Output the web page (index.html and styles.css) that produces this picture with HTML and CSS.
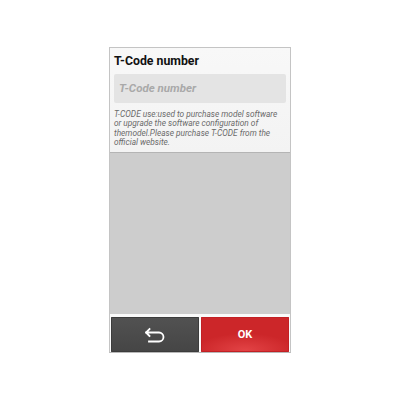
FILE: index.html
```html
<!DOCTYPE html>
<html>
<head>
<meta charset="utf-8">
<link rel="stylesheet" href="styles.css">
</head>
<body>
<div class="panel">
  <div class="top">
    <div class="title">T-Code number</div>
    <div class="input">T-Code number</div>
    <p class="desc">T-CODE use:used to purchase model software or upgrade the software configuration of themodel.Please purchase T-CODE from the official website.</p>
  </div>
  <div class="body"></div>
  <div class="actions">
    <button class="btn back" type="button">
      <svg width="20" height="16" viewBox="0 0 20 16"><path d="M4.5 2 L1 5.5 L4.5 9 M1 5.5 H14 A4.5 4.5 0 0 1 14 14.5 H4" fill="none" stroke="#fff" stroke-width="1.8" stroke-linecap="square" stroke-linejoin="miter"/></svg>
    </button>
    <button class="btn ok" type="button">OK</button>
  </div>
</div>
</body>
</html>
```
FILE: styles.css
```css
html, body {
  margin: 0;
  padding: 0;
  background: #fff;
}
body {
  font-family: Roboto, "Liberation Sans", Arial, sans-serif;
}
.panel {
  margin: 47px 0 0 109px;
  width: 180px;
  height: 304px;
  border: 1px solid #c4c4c4;
  border-bottom-color: #b8b8b8;
  display: flex;
  flex-direction: column;
}
.top {
  background: linear-gradient(#f8f8f8, #f3f3f3);
  border-bottom: 1px solid #b4b4b4;
  padding: 5px 4px 0 4px;
  box-sizing: border-box;
  height: 105px;
}
.title {
  font-weight: bold;
  font-size: 12.3px;
  line-height: 16px;
  color: #111;
}
.input {
  margin-top: 5px;
  height: 29px;
  background: #e4e4e4;
  border-radius: 2px;
  font-weight: bold;
  font-style: italic;
  font-size: 11.5px;
  line-height: 29px;
  color: #a9a9a9;
  padding-left: 5px;
}
.desc {
  margin: 7px 0 0 0;
  font-style: italic;
  font-size: 8.3px;
  line-height: 9.4px;
  color: #6a6a6a;
}
.body {
  flex: 1;
  background: #cdcdcd;
}
.actions {
  display: flex;
  gap: 2px;
  padding: 3px 1px 0 1px;
  height: 38px;
  box-sizing: border-box;
  background: #fafafa;
}
.btn {
  flex: 1;
  border: 0;
  margin: 0;
  padding: 0;
  height: 35px;
  border-radius: 1px;
  display: flex;
  align-items: center;
  justify-content: center;
  font-family: Roboto, "Liberation Sans", Arial, sans-serif;
}
.back {
  background: linear-gradient(#525252, #454545);
  box-shadow: inset 0 0 0 1px #3c3c3c;
}
.ok {
  background: radial-gradient(ellipse 70% 60% at 50% 95%, #e24345, #cc2629 80%);
  box-shadow: inset 0 0 0 1px #c22024;
  color: #fff;
  font-weight: bold;
  font-size: 11px;
}
```
